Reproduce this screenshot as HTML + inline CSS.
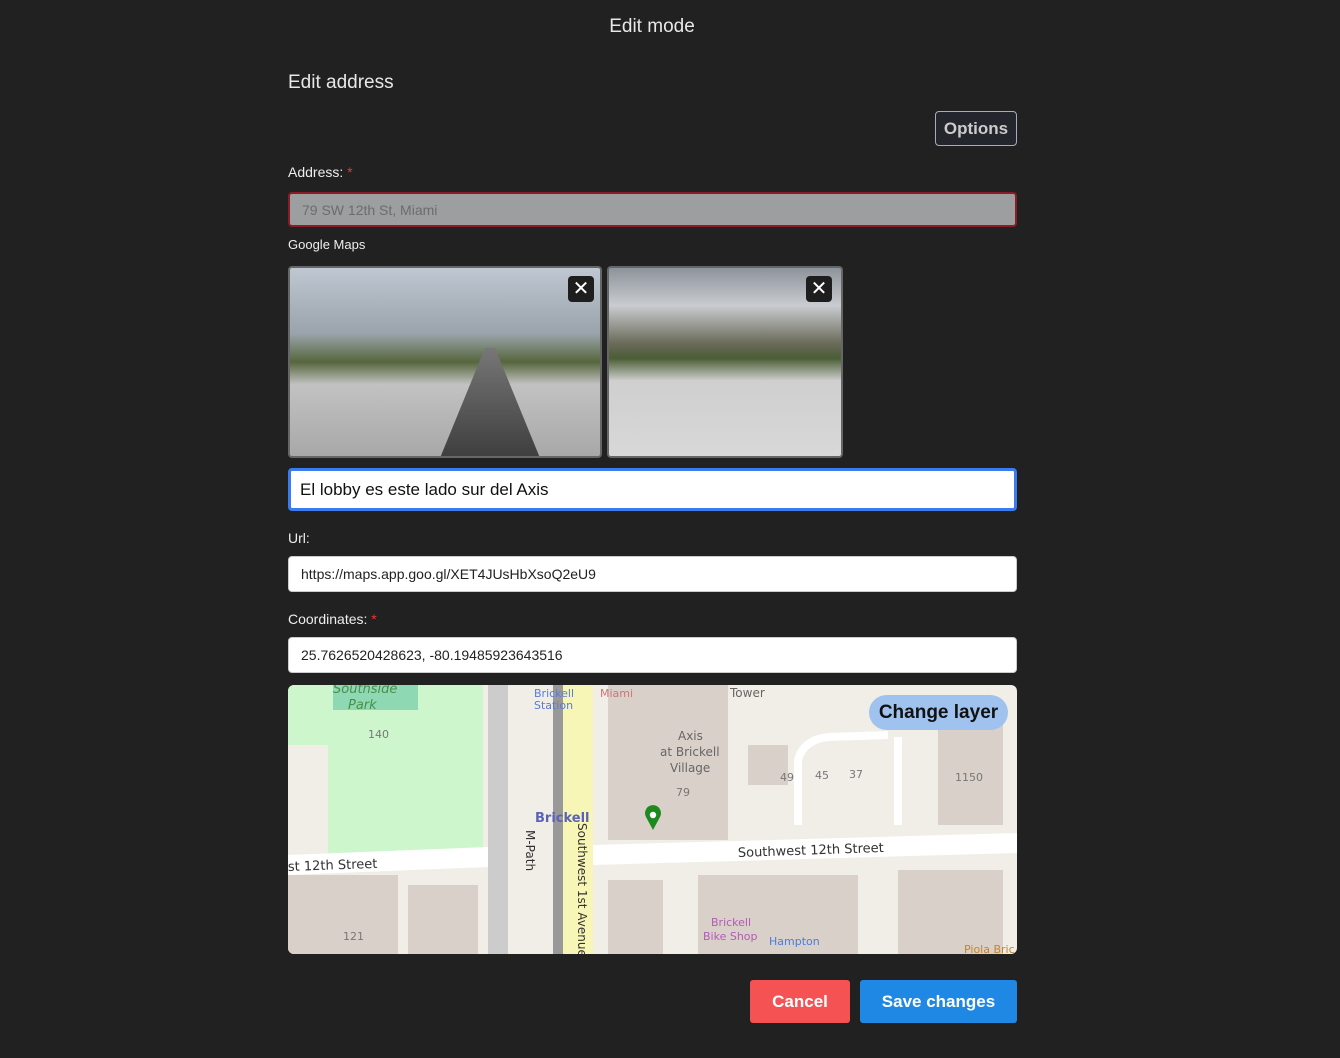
<!DOCTYPE html>
<html><head><style>
body{margin:0;background:#212121;font-family:"Liberation Sans",sans-serif;color:#eee;width:1340px;height:1058px;position:relative;overflow:hidden}
.a{position:absolute}
.inp{position:absolute;left:288px;width:729px;box-sizing:border-box;border-radius:4px;font-size:15px;padding-left:12px;display:flex;align-items:center}
.x{position:absolute;top:8px;width:26px;height:26px;background:#1e1e1e;border-radius:4px;color:#fff;font-size:20px;line-height:26px;text-align:center}
</style></head><body>
<div class="a" style="left:0;width:1304px;top:16px;text-align:center;font-size:19px;color:#e8e8e8">Edit mode</div>
<div class="a" style="left:288px;top:72px;font-size:19px;color:#e8e8e8">Edit address</div>
<div class="a" style="left:935px;top:111px;width:80px;height:33px;border:1px solid #aab;border-radius:4px;background:#23262c;color:#ccc;font-weight:bold;font-size:17px;line-height:33px;text-align:center">Options</div>
<div class="a" style="left:288px;top:164px;font-size:14px">Address: <span style="color:#e33">*</span></div>
<div class="inp" style="top:192px;height:35px;background:#9d9e9f;border:2px solid #8b1c26;color:#6c6c6c;font-size:14px">79 SW 12th St, Miami</div>
<div class="a" style="left:288px;top:237px;font-size:13px">Google Maps</div>
<div class="a" style="left:288px;top:266px;width:310px;height:188px;border:2px solid #666;border-radius:4px;overflow:hidden;background:linear-gradient(180deg,#bfc7d2 0%,#9aa3ab 35%,#56663c 50%,#c2c2c2 62%,#a8a8a8 100%)">
<div class="a" style="left:150px;top:80px;width:100px;height:110px;background:linear-gradient(180deg,#777,#3e3e3e);clip-path:polygon(45% 0,55% 0,100% 100%,0 100%)"></div>
<div class="x" style="left:278px">✕</div></div>
<div class="a" style="left:607px;top:266px;width:232px;height:188px;border:2px solid #666;border-radius:4px;overflow:hidden;background:linear-gradient(180deg,#8d939a 0%,#c9ccd0 20%,#6b6b5a 40%,#4a5d35 48%,#cfcfcf 60%,#d8d8d8 100%)">
<div class="x" style="left:197px">✕</div></div>
<div class="inp" style="top:468px;height:43px;background:#fff;border:3px solid #3a7bf0;color:#111;font-size:17px;padding-left:9px">El lobby es este lado sur del Axis</div>
<div class="a" style="left:288px;top:530px;font-size:14px">Url:</div>
<div class="inp" style="top:556px;height:36px;background:#fff;border:1px solid #ccc;color:#222;font-size:14px">https://maps.app.goo.gl/XET4JUsHbXsoQ2eU9</div>
<div class="a" style="left:288px;top:611px;font-size:14px">Coordinates: <span style="color:#e33">*</span></div>
<div class="inp" style="top:637px;height:36px;background:#fff;border:1px solid #ccc;color:#222;font-size:14px">25.7626520428623, -80.19485923643516</div>
<div class="a" style="left:288px;top:685px;width:729px;height:269px;border-radius:6px;overflow:hidden;background:#f1eee8">
<svg width="729" height="269" style="position:absolute;left:0;top:0" font-family="DejaVu Sans,sans-serif">
<rect x="0" y="0" width="195" height="175" fill="#cdf6cc"/>
<rect x="0" y="60" width="40" height="110" fill="#f1eee8"/>
<rect x="45" y="0" width="85" height="25" fill="#8ed9b4"/>
<rect x="200" y="0" width="20" height="269" fill="#ccc"/>
<rect x="275" y="0" width="30" height="269" fill="#f7f6b7"/>
<rect x="265" y="0" width="10" height="269" fill="#999"/>
<rect x="320" y="0" width="120" height="155" fill="#d9d0c9"/>
<rect x="460" y="60" width="40" height="40" fill="#d9d0c9"/>
<rect x="650" y="40" width="65" height="100" fill="#d9d0c9"/>
<rect x="0" y="190" width="110" height="79" fill="#d9d0c9"/>
<rect x="120" y="200" width="70" height="69" fill="#d9d0c9"/>
<rect x="320" y="195" width="55" height="74" fill="#d9d0c9"/>
<rect x="410" y="190" width="160" height="79" fill="#d9d0c9"/>
<rect x="610" y="185" width="105" height="84" fill="#d9d0c9"/>
<polygon points="0,170 200,162 200,182 0,190" fill="#fff"/>
<polygon points="305,160 729,148 729,168 305,180" fill="#fff"/>
<path d="M510 140 V75 Q515 55 540 52 L600 50 M610 52 V140" stroke="#fff" stroke-width="8" fill="none"/>
<text x="45" y="8" fill="#4a8f4a" font-size="13" font-style="italic">Southside</text>
<text x="60" y="24" fill="#4a8f4a" font-size="13" font-style="italic">Park</text>
<text x="80" y="53" fill="#777" font-size="11">140</text>
<text x="0" y="186" fill="#333" font-size="13" transform="rotate(-2 0 186)">st 12th Street</text>
<text x="450" y="172" fill="#333" font-size="13" transform="rotate(-2 450 172)">Southwest 12th Street</text>
<text x="390" y="55" fill="#666" font-size="12">Axis</text>
<text x="372" y="71" fill="#666" font-size="12">at Brickell</text>
<text x="382" y="87" fill="#666" font-size="12">Village</text>
<text x="388" y="111" fill="#777" font-size="11">79</text>
<text x="442" y="12" fill="#666" font-size="12">Tower</text>
<text x="312" y="12" fill="#c77" font-size="11">Miami</text>
<text x="246" y="12" fill="#5a7ad8" font-size="11">Brickell</text>
<text x="246" y="24" fill="#5a7ad8" font-size="11">Station</text>
<text x="247" y="137" fill="#5a63b8" font-size="13" font-weight="bold">Brickell</text>
<text x="492" y="96" fill="#777" font-size="11">49</text><text x="527" y="94" fill="#777" font-size="11">45</text><text x="561" y="93" fill="#777" font-size="11">37</text>
<text x="667" y="96" fill="#777" font-size="11">1150</text>
<text x="55" y="255" fill="#777" font-size="11">121</text>
<text x="423" y="241" fill="#b35ab8" font-size="11">Brickell</text>
<text x="415" y="255" fill="#b35ab8" font-size="11">Bike Shop</text>
<text x="481" y="260" fill="#4a7ed8" font-size="11">Hampton</text>
<text x="676" y="268" fill="#c8842a" font-size="11">Piola Bric</text>
<text x="290" y="138" fill="#333" font-size="12" transform="rotate(90 290 138)">Southwest 1st Avenue</text>
<text x="238" y="145" fill="#333" font-size="12" transform="rotate(90 238 145)">M-Path</text>
<path d="M365 145 L358 132 A8 8 0 1 1 372 132 Z" fill="#1e8a1e"/>
<circle cx="365" cy="130" r="3.2" fill="#fff"/>
</svg>
<div class="a" style="left:581px;top:10px;width:139px;height:35px;border-radius:18px;background:#9fc3ee;color:#111;font-size:19px;font-weight:bold;line-height:35px;text-align:center;font-family:'Liberation Sans',sans-serif">Change layer</div>
</div>
<div class="a" style="left:750px;top:980px;width:100px;height:43px;background:#f55253;border-radius:3px;color:#fff;font-weight:bold;font-size:17px;line-height:43px;text-align:center">Cancel</div>
<div class="a" style="left:860px;top:980px;width:157px;height:43px;background:#1f88e5;border-radius:3px;color:#fff;font-weight:bold;font-size:17px;line-height:43px;text-align:center">Save changes</div>
</body></html>
